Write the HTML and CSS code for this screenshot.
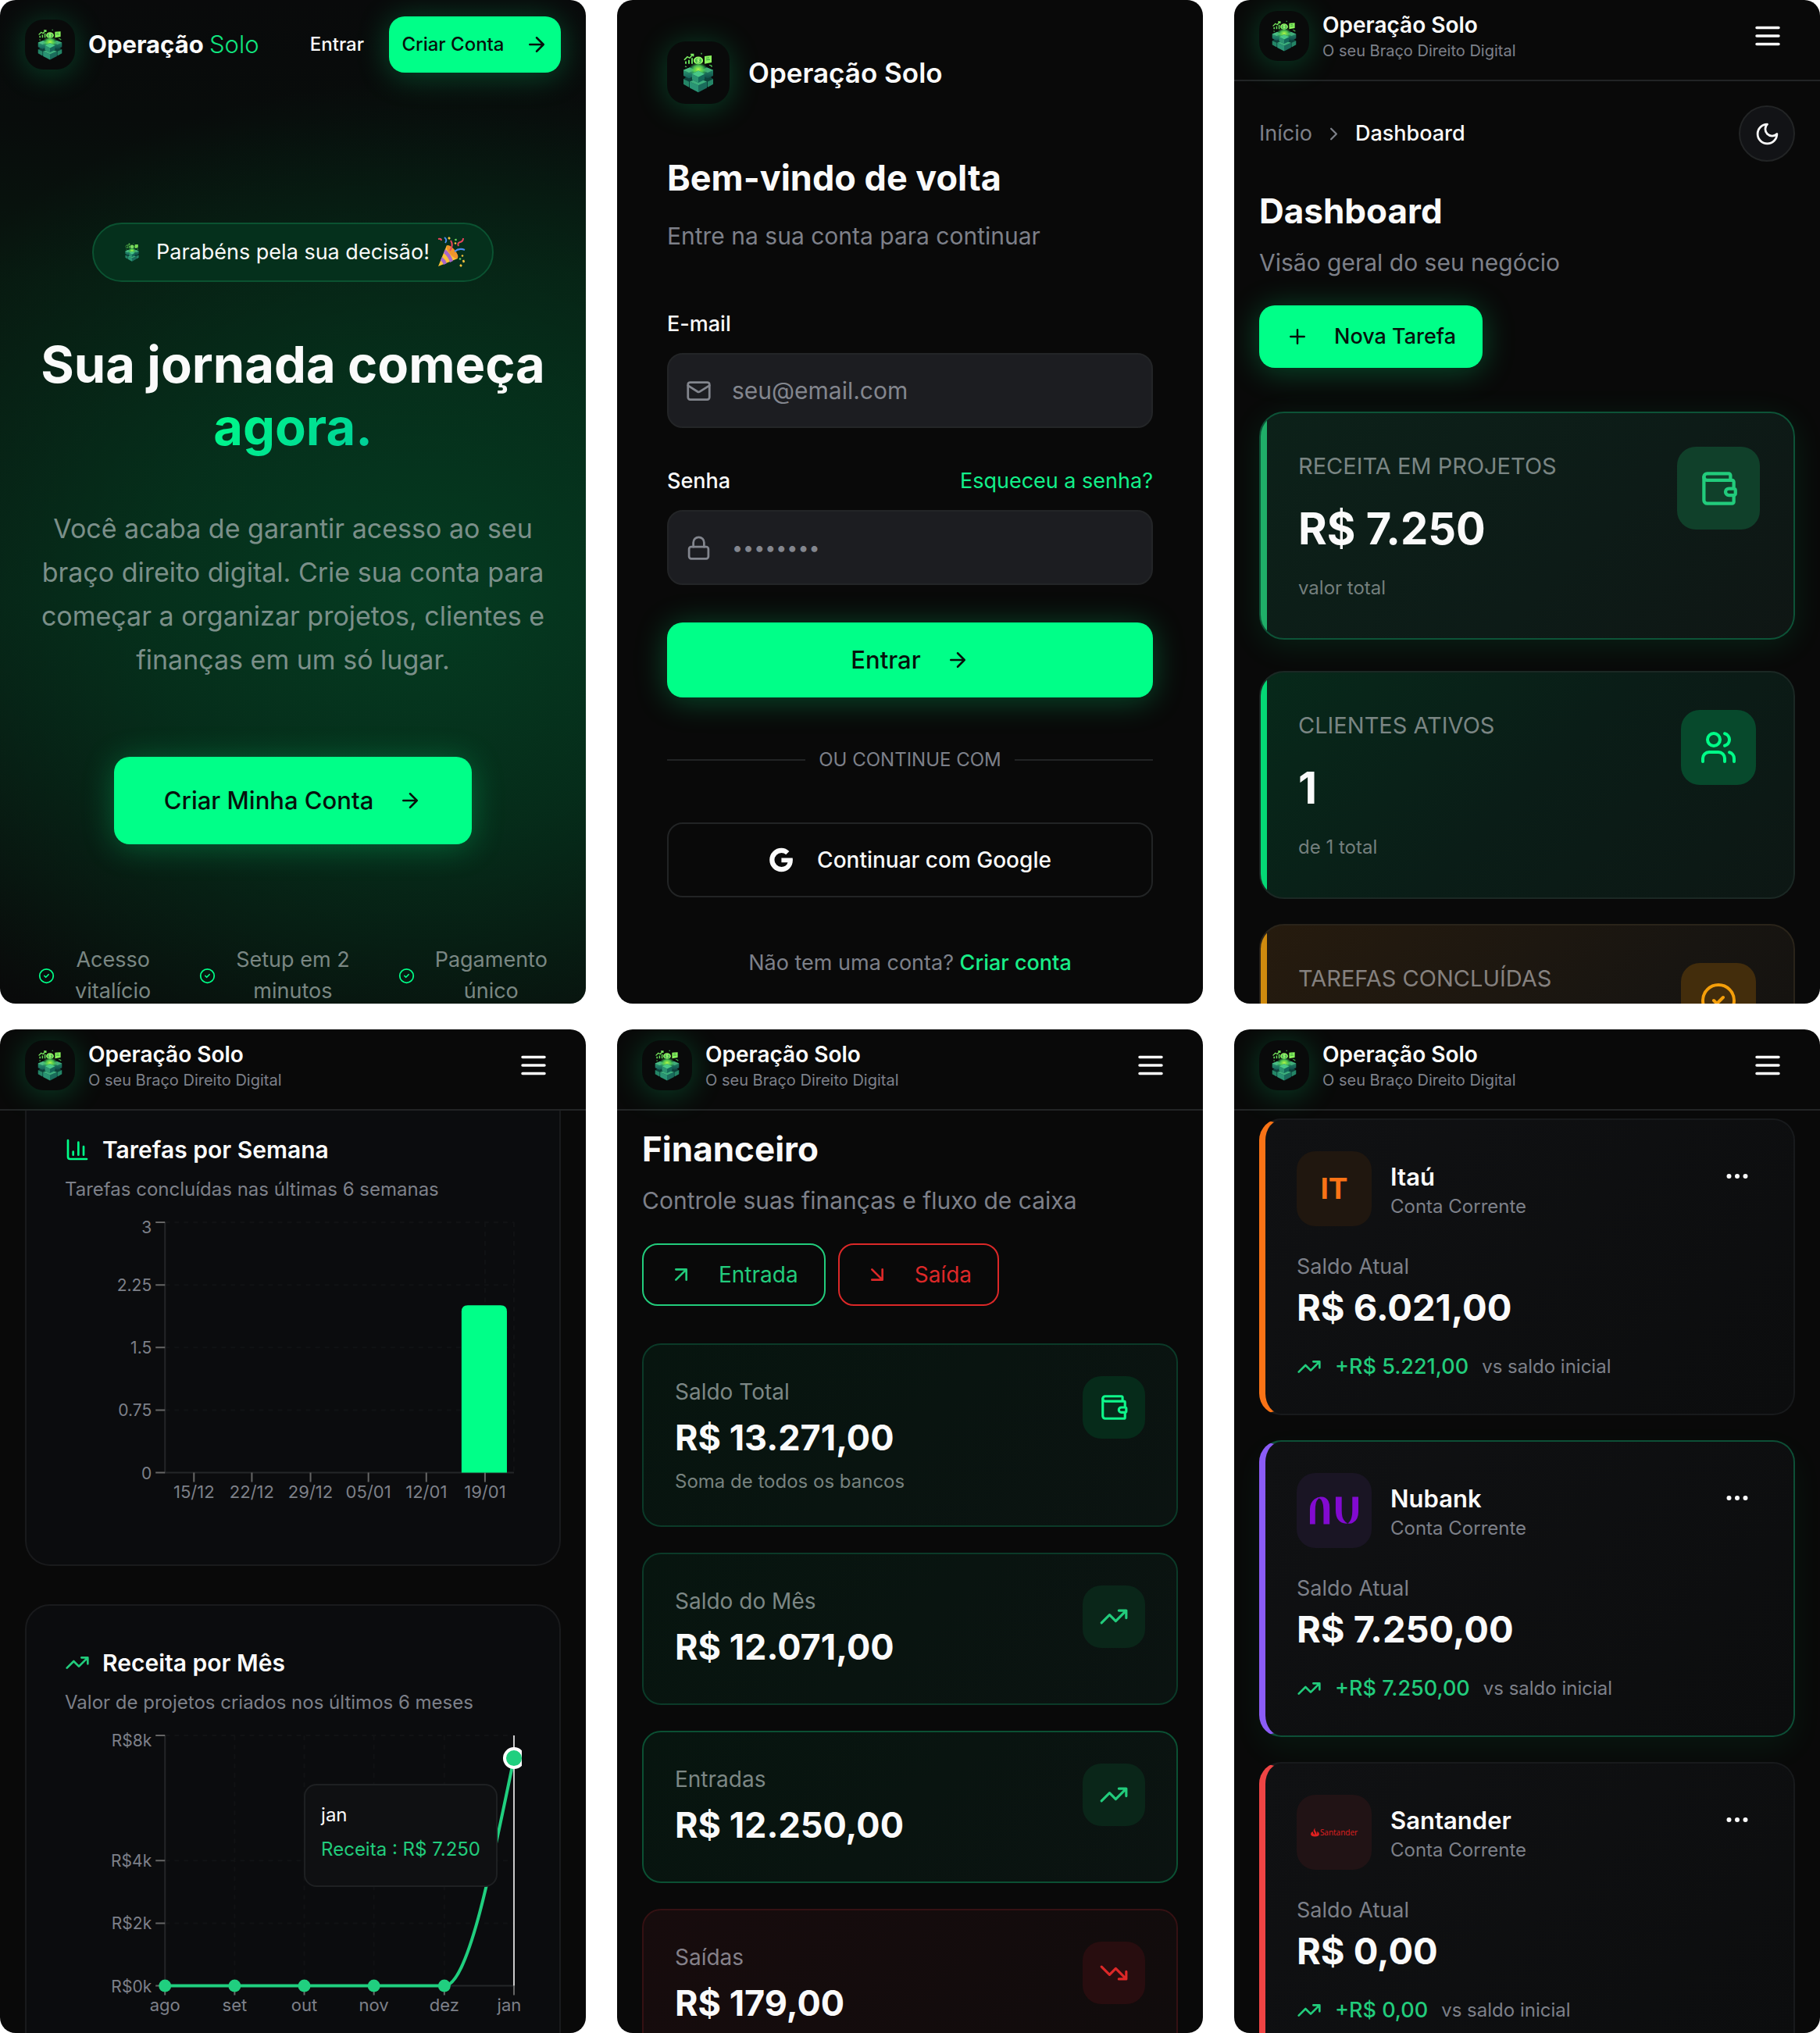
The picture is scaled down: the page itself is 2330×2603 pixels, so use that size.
FILE: index.html
```html
<!DOCTYPE html>
<html lang="pt-BR">
<head>
<meta charset="utf-8">
<meta name="viewport" content="width=device-width, initial-scale=1">
<title>Operação Solo</title>
<link rel="stylesheet" href="styles.css">
</head>
<body>
<svg class="sprite" aria-hidden="true">
  <defs>
    <linearGradient id="g-left" x1="0" y1="0" x2="0" y2="1"><stop offset="0" stop-color="#33a874"/><stop offset="1" stop-color="#14605a"/></linearGradient>
    <linearGradient id="g-right" x1="0" y1="0" x2="0" y2="1"><stop offset="0" stop-color="#27906a"/><stop offset="1" stop-color="#0f4d4a"/></linearGradient>
    <radialGradient id="g-glow"><stop offset="0" stop-color="#b4fb4b"/><stop offset=".5" stop-color="#55d450" stop-opacity=".85"/><stop offset="1" stop-color="#2c9d52" stop-opacity="0"/></radialGradient>
  </defs>
  <symbol id="logo" viewBox="0 0 40 64" preserveAspectRatio="none">
    <path d="M2 12l4-5 3 2 4-6M10 3h3.500v3.500" fill="none" stroke="#78e85e" stroke-width="1.800"/>
    <path d="M4 18v-4M8 18v-6M12 18V9" stroke="#63d957" stroke-width="2"/>
    <circle cx="20" cy="13" r="5.200" fill="#46b94f" stroke="#9bff66" stroke-width="1.800"/>
    <path d="M22 10.500h-3q-1.500 1.200 0 2.400h2q1.500 1.200 0 2.600h-3M20 9v8" fill="none" stroke="#c8ff86" stroke-width="1"/>
    <path d="M28 6l9-1v11l-9 2z" fill="#8af55c"/>
    <path d="M30 9l4-.5M30 12l5-.6" stroke="#2d8a3f" stroke-width="1"/>
    <path d="M3 22l2 1M34 20l3 1M24 1v2M36 22h2" stroke="#4fbf57" stroke-width="1.500"/>
    <path d="M1 28l9-5 10-4 10 4 9 5v8l-3 3 3 3v8l-10 6-9 6-9-6-10-6v-8l3-3-3-3z" fill="#0c433b"/>
    <path d="M1 28l8-4 7 4v9l-8 4-7-4z" fill="url(#g-left)"/>
    <path d="M24 28l7-4 8 4v9l-7 4-8-4z" fill="url(#g-right)"/>
    <path d="M1 28l8-4 7 4-8 4z" fill="#4cbd84"/>
    <path d="M24 28l7-4 8 4-7 4z" fill="#42ad7a"/>
    <path d="M1 42l7 4v9l-7-5zM39 42l-7 4v9l7-5z" fill="#248566"/>
    <path d="M9 46l11 6v11l-11-7z" fill="#2a9474"/>
    <path d="M31 46l-11 6v11l11-7z" fill="#1a6c5c"/>
    <path d="M9 46l11-5 11 5-11 6z" fill="#3cae7c"/>
    <circle cx="20" cy="27" r="12" fill="url(#g-glow)"/>
    <path d="M12 34l8-5 8 5v9l-8 5-8-5z" fill="#14695a"/>
    <path d="M12 34l8-5 8 5-8 5z" fill="#49c987"/>
    <path d="M12 34v9l8 5v-9z" fill="#2b9370"/>
  </symbol>
  <symbol id="arrow" viewBox="0 0 24 24"><path d="M5 12h14M12 5l7 7-7 7"/></symbol>
  <symbol id="check" viewBox="0 0 24 24"><circle cx="12" cy="12" r="10"/><path d="M9 12l2 2 4-4"/></symbol>
  <symbol id="mail" viewBox="0 0 24 24"><rect x="2" y="4" width="20" height="16" rx="2"/><path d="M22 7l-8.970 5.700a1.940 1.940 0 0 1-2.060 0L2 7"/></symbol>
  <symbol id="lock" viewBox="0 0 24 24"><rect x="3" y="11" width="18" height="11" rx="2"/><path d="M7 11V7a5 5 0 0 1 10 0v4"/></symbol>
  <symbol id="menu" viewBox="0 0 24 24"><path d="M4 6h16M4 12h16M4 18h16"/></symbol>
  <symbol id="moon" viewBox="0 0 24 24"><path d="M12 3a6 6 0 0 0 9 9 9 9 0 1 1-9-9Z"/></symbol>
  <symbol id="chevron" viewBox="0 0 24 24"><path d="M9 18l6-6-6-6"/></symbol>
  <symbol id="plus" viewBox="0 0 24 24"><path d="M5 12h14M12 5v14"/></symbol>
  <symbol id="wallet" viewBox="0 0 24 24"><path d="M19 7V4a1 1 0 0 0-1-1H5a2 2 0 0 0 0 4h15a1 1 0 0 1 1 1v4h-3a2 2 0 0 0 0 4h3a1 1 0 0 0 1-1v-2a1 1 0 0 0-1-1"/><path d="M3 5v14a2 2 0 0 0 2 2h15a1 1 0 0 0 1-1v-4"/></symbol>
  <symbol id="users" viewBox="0 0 24 24"><path d="M16 21v-2a4 4 0 0 0-4-4H6a4 4 0 0 0-4 4v2"/><circle cx="9" cy="7" r="4"/><path d="M22 21v-2a4 4 0 0 0-3-3.870M16 3.130a4 4 0 0 1 0 7.750"/></symbol>
  <symbol id="chart" viewBox="0 0 24 24"><path d="M3 3v16a2 2 0 0 0 2 2h16M18 17V9M13 17V5M8 17v-3"/></symbol>
  <symbol id="up" viewBox="0 0 24 24"><path d="M22 7l-8.500 8.500-5-5L2 17M16 7h6v6"/></symbol>
  <symbol id="down" viewBox="0 0 24 24"><path d="M22 17l-8.500-8.500-5 5L2 7M16 17h6v-6"/></symbol>
  <symbol id="ne" viewBox="0 0 24 24"><path d="M7 7h10v10M7 17L17 7"/></symbol>
  <symbol id="se" viewBox="0 0 24 24"><path d="M7 7l10 10M17 7v10H7"/></symbol>
  <symbol id="more" viewBox="0 0 24 24"><circle cx="12" cy="12" r="1"/><circle cx="19" cy="12" r="1"/><circle cx="5" cy="12" r="1"/></symbol>
</svg>

<main class="screens">

  <section class="screen landing">
    <header class="landing-bar">
      <span class="logo"><svg><use href="#logo"/></svg></span>
      <span class="landing-brand">Operação <em>Solo</em></span>
      <a class="landing-login" href="#">Entrar</a>
      <button class="btn btn-compact">Criar Conta <svg class="icon i30"><use href="#arrow"/></svg></button>
    </header>
    <div class="pill">
      <svg class="pill-logo"><use href="#logo"/></svg>
      <span>Parabéns pela sua decisão!</span>
      <svg class="party" viewBox="0 0 36 40" role="img" aria-label="Festa">
        <path d="M1 38L12 11q8 4 14 17z" fill="#fcc236"/>
        <path d="M8 21q6 5 8 12l4-2Q17 22 10 16zM4 30q3 3 4 6l4-2q-2-5-6-8z" fill="#a767c9"/>
        <ellipse cx="19" cy="19.500" rx="4" ry="10.500" transform="rotate(-40 19 19.500)" fill="#f0952c"/>
        <path d="M16 18q5-7 1-13M27 12q-2-4 2-5t4-5M1 3q4-1 4 2" fill="none" stroke="#e5455c" stroke-width="2"/>
        <path d="M22 19q6-5 13-2M9 1q4 3 1 7" fill="none" stroke="#4c8df0" stroke-width="2"/>
        <path d="M14 1l2 2M31 24l2 1M33 30l1 3M29 36l2 2M22 8l2 1" stroke="#f7c33c" stroke-width="2.500"/>
        <path d="M28 28l2 1M23 3l1 2" stroke="#6bd05d" stroke-width="2.500"/>
      </svg>
    </div>
    <h1 class="hero">Sua jornada começa <span>agora.</span></h1>
    <p class="lead">Você acaba de garantir acesso ao seu braço direito digital. Crie sua conta para começar a organizar projetos, clientes e finanças em um só lugar.</p>
    <button class="btn btn-hero">Criar Minha Conta <svg class="icon i30"><use href="#arrow"/></svg></button>
    <ul class="perks">
      <li><svg class="icon i21"><use href="#check"/></svg><span>Acesso<br>vitalício</span></li>
      <li><svg class="icon i21"><use href="#check"/></svg><span>Setup em 2<br>minutos</span></li>
      <li><svg class="icon i21"><use href="#check"/></svg><span>Pagamento<br>único</span></li>
    </ul>
  </section>

  <section class="screen login">
    <div class="login-brand"><span class="logo logo-lg"><svg><use href="#logo"/></svg></span>Operação Solo</div>
    <h1>Bem-vindo de volta</h1>
    <p class="sub">Entre na sua conta para continuar</p>
    <form>
      <div class="field">
        <div class="field-head"><label for="email">E-mail</label></div>
        <div class="control"><svg class="icon i33"><use href="#mail"/></svg><input id="email" type="email" placeholder="seu@email.com"></div>
      </div>
      <div class="field">
        <div class="field-head"><label for="senha">Senha</label><a href="#">Esqueceu a senha?</a></div>
        <div class="control"><svg class="icon i33"><use href="#lock"/></svg><input id="senha" type="password" placeholder="••••••••"></div>
      </div>
      <button class="btn btn-wide" type="button">Entrar <svg class="icon i30"><use href="#arrow"/></svg></button>
      <div class="divider">OU CONTINUE COM</div>
      <button class="btn-google" type="button">
        <svg viewBox="0 0 24 24"><path fill="currentColor" d="M12.300 10.200v4.300h6c-.6 2.700-2.900 4.200-6 4.200a6.700 6.700 0 0 1 0-13.400c1.600 0 3.100.6 4.300 1.600l3.200-3.200A11.400 11.400 0 0 0 12.300.6a11.400 11.400 0 0 0 0 22.800c5.700 0 10.900-4.100 10.900-11.400 0-.6-.1-1.200-.2-1.800z"/></svg>
        Continuar com Google</button>
    </form>
    <p class="signup">Não tem uma conta? <a href="#">Criar conta</a></p>
  </section>

  <section class="screen">
    <header class="bar">
      <span class="logo"><svg><use href="#logo"/></svg></span>
      <div class="bar-text"><strong>Operação Solo</strong><small>O seu Braço Direito Digital</small></div>
      <button class="bar-menu" aria-label="Menu"><svg class="icon i42"><use href="#menu"/></svg></button>
    </header>
    <div class="content">
      <div class="crumbs">
        <a href="#">Início</a><svg class="icon i27"><use href="#chevron"/></svg><span>Dashboard</span>
        <button class="theme" aria-label="Tema"><svg class="icon i33"><use href="#moon"/></svg></button>
      </div>
      <h1 class="title title-dash">Dashboard</h1>
      <p class="sub sub-tight">Visão geral do seu negócio</p>
      <button class="btn btn-new"><svg class="icon i30"><use href="#plus"/></svg> Nova Tarefa</button>
      <article class="stat stat-revenue">
        <div><h2>RECEITA EM PROJETOS</h2><p class="stat-value">R$ 7.250</p><p class="stat-note">valor total</p></div>
        <span class="tile tile-lg tile-xl"><svg class="icon i51"><use href="#wallet"/></svg></span>
      </article>
      <article class="stat stat-clients">
        <div><h2>CLIENTES ATIVOS</h2><p class="stat-value">1</p><p class="stat-note">de 1 total</p></div>
        <span class="tile tile-lg"><svg class="icon i48"><use href="#users"/></svg></span>
      </article>
      <article class="stat stat-tasks">
        <h2>TAREFAS CONCLUÍDAS</h2>
        <span class="tile tile-lg"><svg class="icon i48"><use href="#check"/></svg></span>
      </article>
    </div>
  </section>

  <section class="screen">
    <header class="bar">
      <span class="logo"><svg><use href="#logo"/></svg></span>
      <div class="bar-text"><strong>Operação Solo</strong><small>O seu Braço Direito Digital</small></div>
      <button class="bar-menu" aria-label="Menu"><svg class="icon i42"><use href="#menu"/></svg></button>
    </header>
    <div class="content">
      <article class="panel panel-scrolled">
        <h2><svg class="icon i32 neon"><use href="#chart"/></svg>Tarefas por Semana</h2>
        <p>Tarefas concluídas nas últimas 6 semanas</p>
        <svg class="plot" viewBox="0 0 582 390">
          <g class="grid"><path d="M128 10H574M128 90H574M128 170H574M128 250H574M537 10V330M574 10V330"/></g>
          <g class="axis"><path d="M128 10V330H574"/></g>
          <g class="tick"><path d="M116 10H128M116 90H128M116 170H128M116 250H128M116 330H128M165 330V342M239 330V342M314 330V342M388 330V342M462 330V342M537 330V342"/></g>
          <path d="M507 330V124q0-8 8-8h42q8 0 8 8v206z" fill="#00ff88"/>
          <g class="label-y"><text x="111" y="24">3</text><text x="111" y="98">2.25</text><text x="111" y="178">1.5</text><text x="111" y="258">0.75</text><text x="111" y="338">0</text></g>
          <g class="label-x"><text x="165" y="362">15/12</text><text x="239" y="362">22/12</text><text x="314" y="362">29/12</text><text x="388" y="362">05/01</text><text x="462" y="362">12/01</text><text x="537" y="362">19/01</text></g>
        </svg>
      </article>
      <article class="panel">
        <h2><svg class="icon i32 green"><use href="#up"/></svg>Receita por Mês</h2>
        <p>Valor de projetos criados nos últimos 6 meses</p>
        <div class="plot-wrap">
          <svg class="plot" viewBox="0 0 582 390">
            <defs><clipPath id="plot-clip"><rect x="0" y="0" width="584" height="390"/></clipPath></defs>
            <g class="grid"><path d="M128 10H574M128 170H574M128 250H574M217 10V330M306 10V330M395 10V330M485 10V330"/></g>
            <g class="axis"><path d="M128 10V330H574"/></g>
            <g class="tick"><path d="M116 10H128M116 170H128M116 250H128M116 330H128M128 330V342M217 330V342M306 330V342M395 330V342M485 330V342M574 330V342"/></g>
            <path d="M574 10V330" stroke="#ccc" stroke-width="2"/>
            <path d="M128 330H485C515 330 544 185 574 39" fill="none" stroke="#20cf7f" stroke-width="4"/>
            <g fill="#20cf7f"><circle cx="128" cy="330" r="8"/><circle cx="217" cy="330" r="8"/><circle cx="306" cy="330" r="8"/><circle cx="395" cy="330" r="8"/><circle cx="485" cy="330" r="8"/></g>
            <circle cx="574" cy="39" r="12" fill="#20cf7f" stroke="#fff" stroke-width="4" clip-path="url(#plot-clip)"/>
            <g class="label-y"><text x="111" y="24">R$8k</text><text x="111" y="178">R$4k</text><text x="111" y="258">R$2k</text><text x="111" y="338">R$0k</text></g>
            <g class="label-x"><text x="128" y="362">ago</text><text x="217" y="362">set</text><text x="306" y="362">out</text><text x="395" y="362">nov</text><text x="485" y="362">dez</text><text x="568" y="362">jan</text></g>
          </svg>
          <div class="tooltip"><span>jan</span><span class="green">Receita : R$ 7.250</span></div>
        </div>
      </article>
    </div>
  </section>

  <section class="screen">
    <header class="bar">
      <span class="logo"><svg><use href="#logo"/></svg></span>
      <div class="bar-text"><strong>Operação Solo</strong><small>O seu Braço Direito Digital</small></div>
      <button class="bar-menu" aria-label="Menu"><svg class="icon i42"><use href="#menu"/></svg></button>
    </header>
    <div class="content">
      <h1 class="title title-fin">Financeiro</h1>
      <p class="sub sub-tight">Controle suas finanças e fluxo de caixa</p>
      <div class="actions">
        <button class="btn-line green"><svg class="icon i32"><use href="#ne"/></svg>Entrada</button>
        <button class="btn-line red"><svg class="icon i32"><use href="#se"/></svg>Saída</button>
      </div>
      <div class="money-list">
        <article class="money money-total"><div><h2>Saldo Total</h2><p class="amount">R$ 13.271,00</p><p class="note">Soma de todos os bancos</p></div><span class="tile"><svg class="icon i38"><use href="#wallet"/></svg></span></article>
        <article class="money money-month"><div><h2>Saldo do Mês</h2><p class="amount">R$ 12.071,00</p></div><span class="tile"><svg class="icon i38"><use href="#up"/></svg></span></article>
        <article class="money money-in"><div><h2>Entradas</h2><p class="amount">R$ 12.250,00</p></div><span class="tile"><svg class="icon i38"><use href="#up"/></svg></span></article>
        <article class="money money-out"><div><h2>Saídas</h2><p class="amount">R$ 179,00</p></div><span class="tile"><svg class="icon i38"><use href="#down"/></svg></span></article>
      </div>
    </div>
  </section>

  <section class="screen">
    <header class="bar">
      <span class="logo"><svg><use href="#logo"/></svg></span>
      <div class="bar-text"><strong>Operação Solo</strong><small>O seu Braço Direito Digital</small></div>
      <button class="bar-menu" aria-label="Menu"><svg class="icon i42"><use href="#menu"/></svg></button>
    </header>
    <div class="content banks">
      <article class="bank bank-itau">
        <div class="bank-head">
          <span class="bank-logo">IT</span>
          <div class="bank-name"><h2>Itaú</h2><p class="note">Conta Corrente</p></div>
          <button class="more" aria-label="Opções"><svg class="icon i36"><use href="#more"/></svg></button>
        </div>
        <p class="bank-label">Saldo Atual</p><p class="amount">R$ 6.021,00</p>
        <p class="trend"><svg class="icon i32"><use href="#up"/></svg><b>+R$ 5.221,00</b><span class="note">vs saldo inicial</span></p>
      </article>
      <article class="bank bank-nubank">
        <div class="bank-head">
          <span class="bank-logo"><svg class="nu" viewBox="0 0 66 38" fill="currentColor"><path d="M1 37V17Q1 9 7 4q4-3 9-3-6 3-7 8-1 4-1 11v17z"/><path d="M12 2q5-2 9 0 6 3 6 13v22h-8V18Q19 5 12 2z"/><path d="M35 1h8v18q0 9 3 13 2 3 5 4-8 1-12-4-4-4-4-14z"/><path d="M57 1h8v20q0 10-7 14-3 2-7 1 4-3 5-8 1-3 1-9z"/></svg></span>
          <div class="bank-name"><h2>Nubank</h2><p class="note">Conta Corrente</p></div>
          <button class="more" aria-label="Opções"><svg class="icon i36"><use href="#more"/></svg></button>
        </div>
        <p class="bank-label">Saldo Atual</p><p class="amount">R$ 7.250,00</p>
        <p class="trend"><svg class="icon i32"><use href="#up"/></svg><b>+R$ 7.250,00</b><span class="note">vs saldo inicial</span></p>
      </article>
      <article class="bank bank-santander">
        <div class="bank-head">
          <span class="bank-logo bank-wordmark"><svg viewBox="0 0 12 12" fill="currentColor"><path d="M6 0Q5 2.500 7 5t1 4q2-2 .8-4.500Q12 6 12 8.500 11.500 12 6 12T0 8.500Q0 6 3 5q0 2.500 2 4.500 1-2-.5-4T6 0z"/></svg>Santander</span>
          <div class="bank-name"><h2>Santander</h2><p class="note">Conta Corrente</p></div>
          <button class="more" aria-label="Opções"><svg class="icon i36"><use href="#more"/></svg></button>
        </div>
        <p class="bank-label">Saldo Atual</p><p class="amount">R$ 0,00</p>
        <p class="trend"><svg class="icon i32"><use href="#up"/></svg><b>+R$ 0,00</b><span class="note">vs saldo inicial</span></p>
      </article>
    </div>
  </section>

</main>
</body>
</html>
```
FILE: styles.css
```css
:root {
  --bg: #090909;
  --text: #fafafa;
  --muted: #7d8089;
  --neon: #00ff88;
  --green: #22cc7c;
  --red: #dc2828;
  --line: #222425;
}

* { box-sizing: border-box; margin: 0; padding: 0; }

body {
  background: #fff;
  color: var(--text);
  font-family: Inter, "Liberation Sans", sans-serif;
  font-size: 27px;
  line-height: 40px;
}

button, input { font: inherit; color: inherit; background: none; border: 0; }
a { color: inherit; text-decoration: none; }
h1, h2 { font-weight: 700; }
ul { list-style: none; }
.sprite { position: absolute; width: 0; height: 0; }

.screens {
  display: grid;
  grid-template-columns: repeat(3, 1fr);
  gap: 33px 40px;
}

.screen {
  aspect-ratio: 750 / 1285;
  overflow: hidden;
  border-radius: 20px;
  background: var(--bg);
  display: flex;
  flex-direction: column;
}
.screen > * { flex-shrink: 0; }

/* Icons */
.icon {
  flex: none;
  fill: none;
  stroke: currentColor;
  stroke-width: 2;
  stroke-linecap: round;
  stroke-linejoin: round;
}
.i21 { width: 21px; height: 21px; }
.i27 { width: 27px; height: 27px; }
.i30 { width: 30px; height: 30px; }
.i32 { width: 32px; height: 32px; }
.i33 { width: 33px; height: 33px; }
.i36 { width: 36px; height: 36px; }
.i38 { width: 38px; height: 38px; }
.i42 { width: 42px; height: 42px; }
.i48 { width: 48px; height: 48px; }
.i51 { width: 51px; height: 51px; }
.neon { color: var(--neon); }
.green { color: var(--green); }
.red { color: var(--red); }

.logo {
  flex: none;
  display: grid;
  place-items: center;
  width: 64px;
  height: 64px;
  border-radius: 24px;
  background: #090a0a;
  box-shadow: 0 4px 40px rgba(0, 255, 136, .24);
}
.logo svg { width: 32px; height: 40px; }
.logo-lg { width: 80px; height: 80px; }
.logo-lg svg { width: 40px; height: 52px; }

.btn {
  display: flex;
  align-items: center;
  justify-content: center;
  gap: 32px;
  border-radius: 20px;
  background: var(--neon);
  color: #06120c;
  font-weight: 500;
  box-shadow: 0 4px 40px rgba(0, 255, 136, .28);
}

.sub { color: var(--muted); font-size: 30px; line-height: 44px; }
.note { color: var(--muted); font-size: 24px; line-height: 32px; }

/* Landing */
.landing {
  align-items: center;
  padding: 21px 32px 0;
  background:
    radial-gradient(ellipse 105% 52% at 72% 60%, rgba(4, 64, 35, .85), rgba(4, 58, 32, .65) 45%, rgba(4, 50, 28, 0) 100%),
    linear-gradient(180deg, #090a0b 0%, #080c0b 12%, #08170f 28%, #081c13 60%, #090c0b 92%, #090a0a 100%);
}
.landing-bar { align-self: stretch; display: flex; align-items: center; }
.landing-brand { margin: 0 auto 0 17px; font-size: 31px; font-weight: 700; }
.landing-brand em { font-style: normal; font-weight: 300; color: #10e57f; }
.landing-login { margin-right: 32px; font-size: 24px; font-weight: 500; }
.btn-compact { width: 220px; height: 72px; gap: 26px; font-size: 24px; }

.pill {
  display: flex;
  align-items: center;
  height: 76px;
  margin-top: 192px;
  padding: 0 34px 0 40px;
  border: 2px solid #0b5231;
  border-radius: 38px;
  background: #05301c;
}
.pill-logo { width: 18px; height: 24px; margin-right: 22px; }
.party { width: 36px; height: 40px; margin-left: 10px; }

.hero {
  align-self: stretch;
  margin-top: 66px;
  font-size: 65px;
  line-height: 80px;
  text-align: center;
}
.hero span {
  display: table;
  margin: 0 auto;
  color: transparent;
  background: linear-gradient(135deg, #00ff88, #00cc99);
  background-clip: text;
  -webkit-background-clip: text;
}
.lead { margin-top: 62px; color: #7b8f89; font-size: 34px; line-height: 56px; text-align: center; }
.btn-hero { height: 112px; margin-top: 96px; padding: 0 64px; font-size: 31px; }
.perks { display: flex; gap: 62px; margin-top: 128px; color: #7a8783; text-align: center; }
.perks li { display: flex; align-items: center; gap: 26px; }
.perks svg { color: var(--neon); }

/* Login */
.login { padding: 53px 64px 0; }
.login-brand { display: flex; align-items: center; gap: 24px; font-size: 35px; font-weight: 600; }
.login h1 { margin-top: 67px; font-size: 45px; line-height: 56px; }
.login .sub { margin: 24px 0 71px; }
.field { display: flex; flex-direction: column; gap: 17px; margin-bottom: 48px; }
.field-head { display: flex; justify-content: space-between; font-weight: 500; }
.field-head a { color: #12f08a; font-weight: 400; }
.control {
  display: flex;
  align-items: center;
  gap: 26px;
  height: 96px;
  padding: 0 22px;
  border: 2px solid #232527;
  border-radius: 20px;
  background: #1c1d21;
  color: #83868e;
}
.control input { flex: 1; min-width: 0; font-size: 30px; outline: 0; }
.control input::placeholder { color: #83868e; opacity: 1; }
.control input[type="password"] { font-size: 25px; }
.btn-wide { width: 100%; height: 96px; font-size: 31px; }
.divider {
  display: flex;
  align-items: center;
  gap: 17px;
  margin: 60px 0;
  color: var(--muted);
  font-size: 24px;
}
.divider::before, .divider::after { content: ""; flex: 1; height: 2px; background: var(--line); }
.btn-google {
  display: flex;
  align-items: center;
  justify-content: center;
  gap: 30px;
  width: 100%;
  height: 96px;
  border: 2px solid var(--line);
  border-radius: 20px;
  font-size: 28px;
  font-weight: 500;
}
.btn-google svg { width: 32px; height: 32px; }
.signup { margin-top: 64px; color: var(--muted); text-align: center; }
.signup a { color: #18ee88; font-weight: 500; }

/* App bar */
.bar {
  display: flex;
  align-items: center;
  height: 104px;
  padding: 13px 32px 23px;
  border-bottom: 2px solid var(--line);
}
.bar-text { margin: 0 auto 0 17px; }
.bar-text strong { display: block; font-size: 28px; line-height: 38px; font-weight: 600; }
.bar-text small { display: block; color: var(--muted); font-size: 20px; line-height: 28px; }
.bar-menu { display: flex; padding: 0 14px; }

.content { padding: 0 32px; }

/* Dashboard */
.crumbs { display: flex; align-items: center; gap: 14px; margin-top: 31px; color: var(--muted); }
.crumbs span { color: var(--text); font-weight: 500; }
.theme {
  display: grid;
  place-items: center;
  width: 72px;
  height: 72px;
  margin-left: auto;
  border: 2px solid var(--line);
  border-radius: 50%;
  background: #121316;
  color: var(--text);
}
.title { font-size: 44px; line-height: 56px; }
.title-dash { margin-top: 35px; }
.title-fin { margin-top: 21px; }
.sub-tight { margin: 16px 0 33px; }
.btn-new { height: 80px; padding: 0 34px; }

.tile {
  flex: none;
  display: grid;
  place-items: center;
  width: 80px;
  height: 80px;
  border-radius: 24px;
}
.tile-lg { width: 96px; height: 96px; }
.tile-xl { width: 106px; height: 106px; margin: -5px; }

.stat {
  display: flex;
  justify-content: space-between;
  align-items: flex-start;
  height: 292px;
  margin-top: 32px;
  padding: 48px;
  border: 2px solid #1b2824;
  border-radius: 32px;
}
.stat h2 { color: #7a8583; font-size: 29px; font-weight: 400; }
.stat-value { margin: 24px 0; font-size: 56px; line-height: 72px; font-weight: 700; }
.stat-note { color: #747f7d; font-size: 24px; line-height: 32px; }
.stat-revenue {
  margin: 56px 0 40px;
  border-color: #0d5337;
  background: linear-gradient(90deg, #1fae68 8px, transparent 8px), linear-gradient(135deg, #0c2119, #0d1b17 60%, #0f1614);
  box-shadow: 0 8px 40px rgba(0, 255, 136, .1);
}
.stat-revenue .tile { background: #10402a; color: var(--green); }
.stat-clients { background: linear-gradient(90deg, #04d875 8px, transparent 8px), linear-gradient(135deg, #07291a, #0a1d17 50%, #0d1714); }
.stat-clients .tile { background: #07492c; color: var(--neon); }
.stat-tasks { border-color: #2a241a; background: linear-gradient(90deg, #cf8a0e 8px, transparent 8px), linear-gradient(135deg, #261b0e, #181511 60%, #12110f); }
.stat-tasks h2 { color: #85817f; }
.stat-tasks .tile { background: #432d0c; color: #f59f0a; }

/* Charts */
.panel {
  margin-top: 49px;
  padding: 53px 50px 57px 49px;
  border: 2px solid #191a1c;
  border-radius: 32px;
  background: #0b0c0e;
}
.panel-scrolled { margin-top: 0; padding-top: 30px; border-top: 0; border-radius: 0 0 32px 32px; }
.panel h2 { display: flex; align-items: center; gap: 16px; font-size: 30px; font-weight: 600; }
.panel > p { margin: 15px 0 16px; color: var(--muted); font-size: 24px; line-height: 32px; }
.plot { display: block; width: 100%; overflow: visible; }
.plot-wrap { position: relative; }
.grid path { fill: none; stroke: #111214; stroke-width: 2; stroke-dasharray: 6 6; }
.axis path { fill: none; stroke: #242628; stroke-width: 2; }
.tick path { fill: none; stroke: #666; stroke-width: 2; }
.label-y, .label-x { fill: var(--muted); font-size: 22px; }
.label-y { font-size: 21px; text-anchor: end; }
.label-x { text-anchor: middle; }
.tooltip {
  position: absolute;
  top: 72px;
  right: 29px;
  display: grid;
  gap: 4px;
  padding: 18px 20px 26px;
  border: 2px solid #1e2022;
  border-radius: 16px;
  background: #0f1012;
  font-size: 24px;
}

/* Finance */
.actions { display: flex; gap: 16px; margin-bottom: 48px; }
.btn-line {
  display: flex;
  align-items: center;
  gap: 32px;
  height: 80px;
  padding: 0 33px 0 32px;
  border: 2px solid currentColor;
  border-radius: 20px;
  font-size: 28px;
  font-weight: 400;
}
.amount { font-size: 47px; line-height: 64px; font-weight: 700; }
.money-list { display: grid; gap: 33px; }
.money {
  display: flex;
  justify-content: space-between;
  align-items: flex-start;
  padding: 40px;
  border: 2px solid #0b3a28;
  border-radius: 24px;
  background: linear-gradient(135deg, #07150f, #0b1311);
}
.money h2 { margin-bottom: 7px; color: #7c8785; font-size: 28px; font-weight: 400; }
.money .amount { font-size: 45px; }
.money .note { margin-top: 8px; color: #77827f; }
.money .tile { background: #0a2619; color: var(--green); }
.money-total .tile { background: #062b1a; color: #0ff68a; }
.money-in { border-color: #0b5033; }
.money-out { border-color: #351113; background: linear-gradient(135deg, #170c0d, #100c0c); }
.money-out h2 { color: #85818a; }
.money-out .tile { background: #280d0f; color: var(--red); }

/* Banks */
.banks { display: grid; gap: 32px; padding-top: 10px; }
.bank {
  padding: 40px;
  border: 2px solid #181a1c;
  border-left: 8px solid var(--brand);
  border-radius: 28px;
  background: linear-gradient(135deg, #101113, #0c0d0e);
}
.bank-head { display: flex; align-items: center; margin-bottom: 32px; }
.bank-logo {
  flex: none;
  display: flex;
  align-items: center;
  justify-content: center;
  width: 96px;
  height: 96px;
  border-radius: 24px;
  background: var(--tint);
  color: var(--brand);
  font-size: 37px;
  font-weight: 700;
}
.bank-name { flex: 1; padding-top: 3px; margin-left: 24px; }
.bank-name h2 { margin-bottom: 2px; font-size: 31px; font-weight: 600; }
.more { align-self: flex-start; display: flex; margin: 14px 14px 0 0; }
.bank-label { color: var(--muted); }
.trend { display: flex; align-items: center; gap: 17px; margin-top: 24px; color: var(--green); }
.trend b { font-weight: 500; }
.bank-itau { --brand: #f97316; --tint: #20170f; }
.bank-nubank { --brand: #8b5cf6; --tint: #1a1524; border-color: #0d4f36; border-left-color: var(--brand); box-shadow: 0 16px 40px rgba(0, 255, 136, .06); }
.bank-nubank .bank-logo { color: #820ad1; }
.nu { width: 64px; height: 38px; }
.bank-santander { --brand: #ef4444; --tint: #211315; }
.bank-wordmark { gap: 1px; color: #e02020; font-family: "Open Sans", sans-serif; font-size: 10px; font-weight: 400; }
.bank-wordmark svg { width: 11px; height: 12px; }
```
